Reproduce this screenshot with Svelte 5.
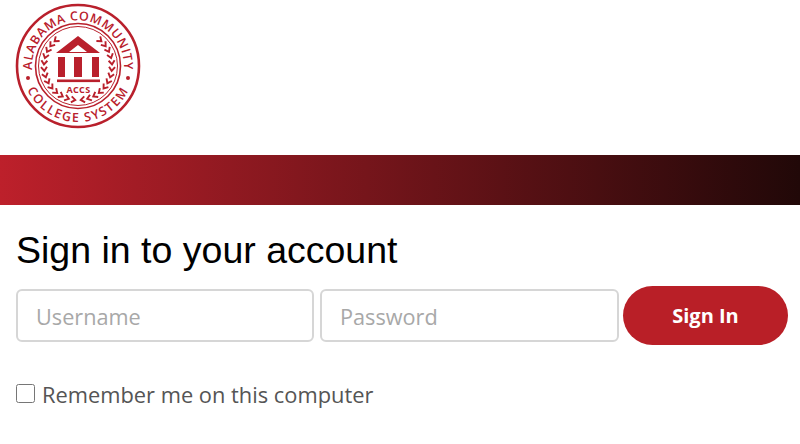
<script>
  let username = $state('');
  let password = $state('');
  let remember = $state(false);

  // wreath leaves, walking up each side from the bottom of the seal
  const laurel = [];
  for (let a = 40; a <= 172; a += 11) {
    laurel.push(a);
  }
</script>

<header class="top">
  <svg class="logo" viewBox="0 0 126 128" width="126" height="128" aria-label="Alabama Community College System">
    <defs>
      <path id="arc-top" d="M 18.5 76 A 46 46 0 1 1 107.5 76" />
      <path id="arc-bottom" d="M 7 64 A 56 56 0 0 0 119 64" />
    </defs>
    <circle cx="63" cy="64" r="61" class="ring" stroke-width="2.6" />
    <circle cx="63" cy="64" r="42.5" class="ring" stroke-width="1.6" />
    <circle cx="63" cy="64" r="39.5" class="ring" stroke-width="1" />
    <text class="seal"><textPath href="#arc-top" startOffset="50%" text-anchor="middle">ALABAMA COMMUNITY</textPath></text>
    <text class="seal wide"><textPath href="#arc-bottom" startOffset="50%" text-anchor="middle">COLLEGE SYSTEM</textPath></text>
    <circle cx="13" cy="76" r="2" class="fill" />
    <circle cx="113" cy="76" r="2" class="fill" />
    {#each laurel as a}
      <path transform="rotate({-a} 63 64) translate(63 30)" d="M2 -3 L-2 0 L2 3" class="leaf" />
      <path transform="rotate({a} 63 64) translate(63 30)" d="M-2 -3 L2 0 L-2 3" class="leaf" />
    {/each}
    <path d="M63 34 L85 51 L41 51 Z M63 43 L54 50 L72 50 Z" class="fill" fill-rule="evenodd" />
    <rect x="43" y="55" width="7" height="20" class="fill" />
    <rect x="59" y="55" width="8" height="20" class="fill" />
    <rect x="77" y="55" width="7" height="20" class="fill" />
    <rect x="42" y="77.5" width="43" height="2.6" class="fill" />
    <text x="63.5" y="91" text-anchor="middle" class="accs">ACCS</text>
  </svg>
</header>

<div class="band"></div>

<main class="content">
  <h1>Sign in to your account</h1>
  <form class="login" onsubmit={(e) => e.preventDefault()}>
    <input type="text" placeholder="Username" bind:value={username} />
    <input type="password" placeholder="Password" bind:value={password} />
    <button type="submit">Sign In</button>
  </form>
  <label class="remember">
    <input type="checkbox" bind:checked={remember} />
    <span>Remember me on this computer</span>
  </label>
</main>

<style>
  :global(body) {
    background: #fff;
    font-family: "Open Sans", sans-serif;
  }
  .top {
    height: 155px;
    padding: 2px 0 0 15px;
    box-sizing: border-box;
  }
  .logo {
    display: block;
  }
  .ring {
    fill: none;
    stroke: #b9202c;
  }
  .fill {
    fill: #b9202c;
  }
  .leaf {
    fill: none;
    stroke: #b9202c;
    stroke-width: 1.9;
  }
  .seal {
    fill: #b9202c;
    font-family: "Open Sans", sans-serif;
    font-size: 12.5px;
    font-weight: 600;
    letter-spacing: 0.6px;
  }
  .seal.wide {
    letter-spacing: 1.6px;
  }
  .accs {
    fill: #b9202c;
    font-family: "Open Sans", sans-serif;
    font-size: 9px;
    font-weight: 700;
    letter-spacing: 0.4px;
  }
  .band {
    height: 50px;
    background: linear-gradient(90deg, #bd202b 0%, #210808 100%);
  }
  .content {
    padding: 24px 12px 0 16px;
  }
  h1 {
    margin: 0;
    font-family: "Liberation Sans", sans-serif;
    font-size: 37.5px;
    line-height: 42px;
    font-weight: 400;
    color: #000;
  }
  .login {
    display: flex;
    align-items: center;
    gap: 6px;
    margin-top: 15px;
  }
  .login input {
    box-sizing: border-box;
    height: 53px;
    padding: 2px 18px 0;
    border: 2px solid #d6d6d6;
    border-radius: 6px;
    background: #fff;
    font-family: "Open Sans", sans-serif;
    font-size: 21.7px;
    color: #444;
    outline: none;
  }
  .login input[type="text"] {
    width: 298px;
  }
  .login input[type="password"] {
    width: 299px;
  }
  .login button {
    width: 165px;
    height: 59px;
    margin-left: -2px;
    border: 0;
    border-radius: 30px;
    background: #b91f27;
    color: #fff;
    font-family: "Open Sans", sans-serif;
    font-size: 20px;
    font-weight: 700;
    cursor: pointer;
  }
  .login input::placeholder {
    color: #a8a8a8;
    opacity: 1;
  }
  .remember {
    display: flex;
    align-items: center;
    gap: 7px;
    margin-top: 35px;
    font-size: 21.85px;
    line-height: 30px;
    color: #555;
  }
  .remember input {
    width: 19px;
    height: 19px;
    margin: -3px 0 0 0;
  }
</style>
